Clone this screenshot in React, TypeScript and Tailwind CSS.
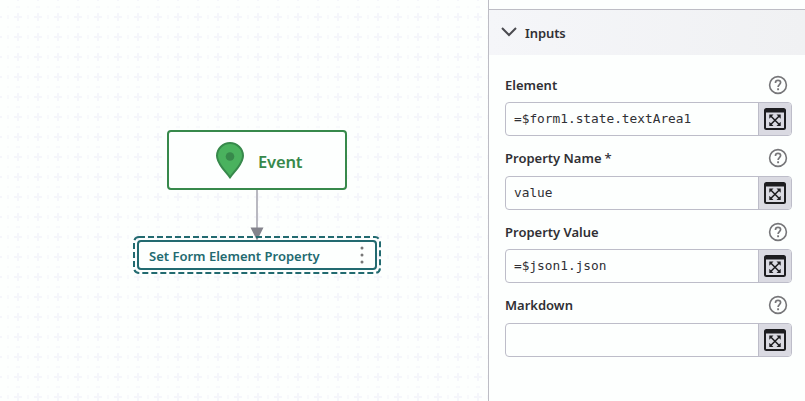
const FONT = "font-['Noto_Sans','Open_Sans',sans-serif]";

function GridBackground() {
  return (
    <svg className="absolute inset-0 h-full w-full" aria-hidden="true">
      <defs>
        <pattern id="grid" width="20" height="20" patternUnits="userSpaceOnUse" x="8" y="7">
          <path d="M6 10h8M10 6v8" stroke="#f5f6fb" strokeWidth="2" />
          <path d="M0 8v4M20 8v4" stroke="#f8f9fc" strokeWidth="2" />
          <path d="M8 0h4M8 20h4" stroke="#f8f9fc" strokeWidth="2" />
          <path d="M0 0h1M19 0h1M0 20h1M19 20h1" stroke="#fafbfc" strokeWidth="2" />
        </pattern>
      </defs>
      <rect width="100%" height="100%" fill="url(#grid)" />
    </svg>
  );
}

function EventNode() {
  return (
    <div className="absolute left-[167px] top-[130px] flex h-[60px] w-[180px] items-center rounded-[4px] border-2 border-[#37894b] bg-[#fdfffe] pl-[46px]">
      <svg width="30" height="38" viewBox="0 0 30 38" className="shrink-0">
        <path
          d="M15 2C8 2 2 7.7 2 14.8c0 4.700 2.400 8 5.200 11.800C10 30.300 13 33.500 15 36.300c2-2.800 5-6 7.800-9.700C25.600 22.800 28 19.500 28 14.800 28 7.700 22 2 15 2z"
          fill="#4ab25e"
          stroke="#37894b"
          strokeWidth="2"
        />
        <circle cx="15" cy="15.500" r="4.300" fill="#37894b" />
      </svg>
      <span className="ml-[13px] mt-[3px] text-[16.500px] font-semibold leading-6 tracking-[-0.150px] text-[#37894b]">Event</span>
    </div>
  );
}

function ActionNode() {
  return (
    <div className="absolute left-[133px] top-[236px] h-[38px] w-[248px]">
      <svg className="absolute inset-0" width="248" height="38" viewBox="0 0 248 38">
        <rect x="1" y="1" width="246" height="36" rx="5" fill="none" stroke="#226a70" strokeWidth="2" strokeDasharray="6 3" />
      </svg>
      <div className="relative ml-[4px] mt-[4px] flex h-[30px] w-[240px] items-center justify-between rounded-[4px] border-2 border-[#226a70] bg-[#fdfffe] pl-[10px] pr-[11px]">
        <span className="mt-[2px] whitespace-nowrap text-[13px] font-semibold leading-5 text-[#226a70]">Set Form Element Property</span>
        <svg width="4" height="20" viewBox="0 0 4 20" fill="#777">
          <circle cx="2" cy="3" r="1.500" />
          <circle cx="2" cy="10" r="1.500" />
          <circle cx="2" cy="17" r="1.500" />
        </svg>
      </div>
    </div>
  );
}

function HelpIcon() {
  return (
    <svg width="20" height="20" viewBox="0 0 20 20" fill="none" stroke="#767679">
      <circle cx="10" cy="10" r="8.400" strokeWidth="1.600" />
      <path d="M7.500 8.100V7.700C7.500 6.200 8.600 5.400 10 5.400s2.600.9 2.600 2.200c0 1.900-2.500 2.100-2.500 4.300" strokeWidth="1.700" />
      <path d="M10.100 13.300v1.900" strokeWidth="1.900" />
    </svg>
  );
}

function ExpandIcon() {
  return (
    <svg width="22" height="22" viewBox="0 0 22 22">
      <rect x="1" y="1" width="20" height="20" rx="1.500" fill="none" stroke="#1d1d20" strokeWidth="2" />
      <path d="M1 1h20v3.500H1z" fill="#1d1d20" />
      <path d="M7 8.200l8 8M15 8.200l-8 8" stroke="#1d1d20" strokeWidth="1.500" />
      <path d="M5.300 6.500h4.200L5.300 10.700zM16.700 6.500v4.200l-4.200-4.200zM5.300 17.900v-4.200l4.200 4.200zM16.700 17.900h-4.200l4.200-4.200z" fill="#1d1d20" />
    </svg>
  );
}

function Field({ label, value, required }: { label: string; value: string; required?: boolean }) {
  return (
    <div className="flex h-[73.600px] flex-col">
      <div className="-mt-[0.400px] flex h-[27.400px] items-start justify-between pr-1">
        <label className="text-[13px] font-semibold leading-5 text-[#303035]">
          {label}
          {required && <span className="ml-[3px] font-medium">*</span>}
        </label>
        <HelpIcon />
      </div>
      <div className="flex h-[34px] shrink-0 overflow-hidden rounded-[4px] border border-[#bdbdc9] bg-[#fdfffe]">
        <div className="flex flex-1 items-center pl-2 font-['DejaVu_Sans_Mono',monospace] text-[12.800px] leading-5 text-[#303035]">
          {value}
        </div>
        <button className="flex w-[33px] items-center justify-center border-l border-[#bdbdc9] bg-[#dadae2]" aria-label="Expand">
          <ExpandIcon />
        </button>
      </div>
    </div>
  );
}

export default function App() {
  return (
    <div className={`flex h-[401px] w-[805px] overflow-hidden bg-[#fdfffe] ${FONT}`}>
      <main className="relative w-[488px] shrink-0 overflow-hidden">
        <GridBackground />
        <svg className="absolute left-[250px] top-[190px]" width="14" height="51" viewBox="0 0 14 51">
          <path d="M7 0v40" stroke="#b9b9c1" strokeWidth="2" />
          <path d="M.5 37.500h13L7 50.500z" fill="#83838c" />
        </svg>
        <EventNode />
        <ActionNode />
      </main>
      <aside className="flex min-w-0 flex-1 flex-col border-l border-[#bdbdc5] bg-[#fdfffe]">
        <div className="h-[9px] shrink-0" />
        <header className="flex h-[46px] shrink-0 items-center border-t border-[#bdbdc5] bg-linear-to-r from-[#f5f6f9] to-[#f0f1f3] pl-3">
          <svg width="16" height="10" viewBox="0 0 16 10" className="-mt-[2px]" fill="none" stroke="#4b4b50" strokeWidth="2">
            <path d="M1 1l7 7 7-7" />
          </svg>
          <span className="ml-2 mt-px text-[13px] font-semibold leading-5 tracking-[-0.100px] text-[#303035]">Inputs</span>
        </header>
        <section className="pl-4 pr-[13px] pt-5">
          <Field label="Element" value="=$form1.state.textArea1" />
          <Field label="Property Name" value="value" required />
          <Field label="Property Value" value="=$json1.json" />
          <Field label="Markdown" value="" />
        </section>
      </aside>
    </div>
  );
}
